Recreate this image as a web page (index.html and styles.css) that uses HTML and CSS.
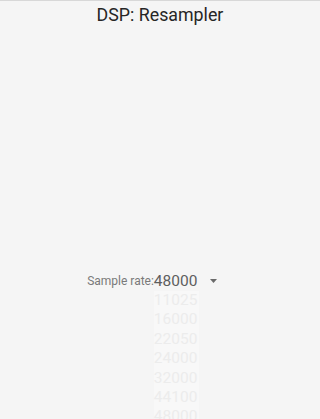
FILE: index.html
```html
<!DOCTYPE html>
<html>
<head>
<meta charset="utf-8">
<link rel="stylesheet" href="styles.css">
</head>
<body>
<div class="app">
  <h1 class="title">DSP: Resampler</h1>
  <div class="content">
    <div class="row">
      <span class="label">Sample rate:</span>
      <div class="select">
        <span class="value">48000</span>
        <svg class="arrow" width="7" height="4" viewBox="0 0 7 4"><polygon points="0,0 7,0 3.5,4" fill="#6a6a6a"/></svg>
        <ul class="menu">
          <li>11025</li>
          <li>16000</li>
          <li>22050</li>
          <li>24000</li>
          <li>32000</li>
          <li>44100</li>
          <li>48000</li>
        </ul>
      </div>
    </div>
  </div>
</div>
</body>
</html>
```
FILE: styles.css
```css
html, body {
  margin: 0;
  padding: 0;
  height: 100%;
  overflow: hidden;
}
body {
  background: #f5f5f5;
  font-family: Roboto, "Liberation Sans", sans-serif;
}
.app {
  height: 100%;
  border-top: 1px solid #d8d8d8;
  box-sizing: border-box;
}
.title {
  margin: 0;
  padding-top: 3px;
  text-align: center;
  font-weight: 400;
  font-size: 17.8px;
  line-height: 22px;
  color: #262626;
}
.content {
  padding-top: 243px;
}
.row {
  display: flex;
  justify-content: center;
  align-items: center;
  height: 24px;
}
.label {
  font-size: 12px;
  color: #7a7a7a;
}
.select {
  position: relative;
  display: flex;
  align-items: center;
  width: 79px;
  height: 24px;
}
.value {
  font-size: 15.5px;
  color: #5e5e5e;
}
.arrow {
  margin-left: auto;
  margin-right: 16px;
}
.menu {
  position: absolute;
  top: 22px;
  left: 0;
  margin: 0;
  padding: 0;
  list-style: none;
  background: #f8f8f8;
}
.menu li {
  font-size: 15.5px;
  line-height: 19.4px;
  color: #ececec;
  padding-right: 2px;
}
```
